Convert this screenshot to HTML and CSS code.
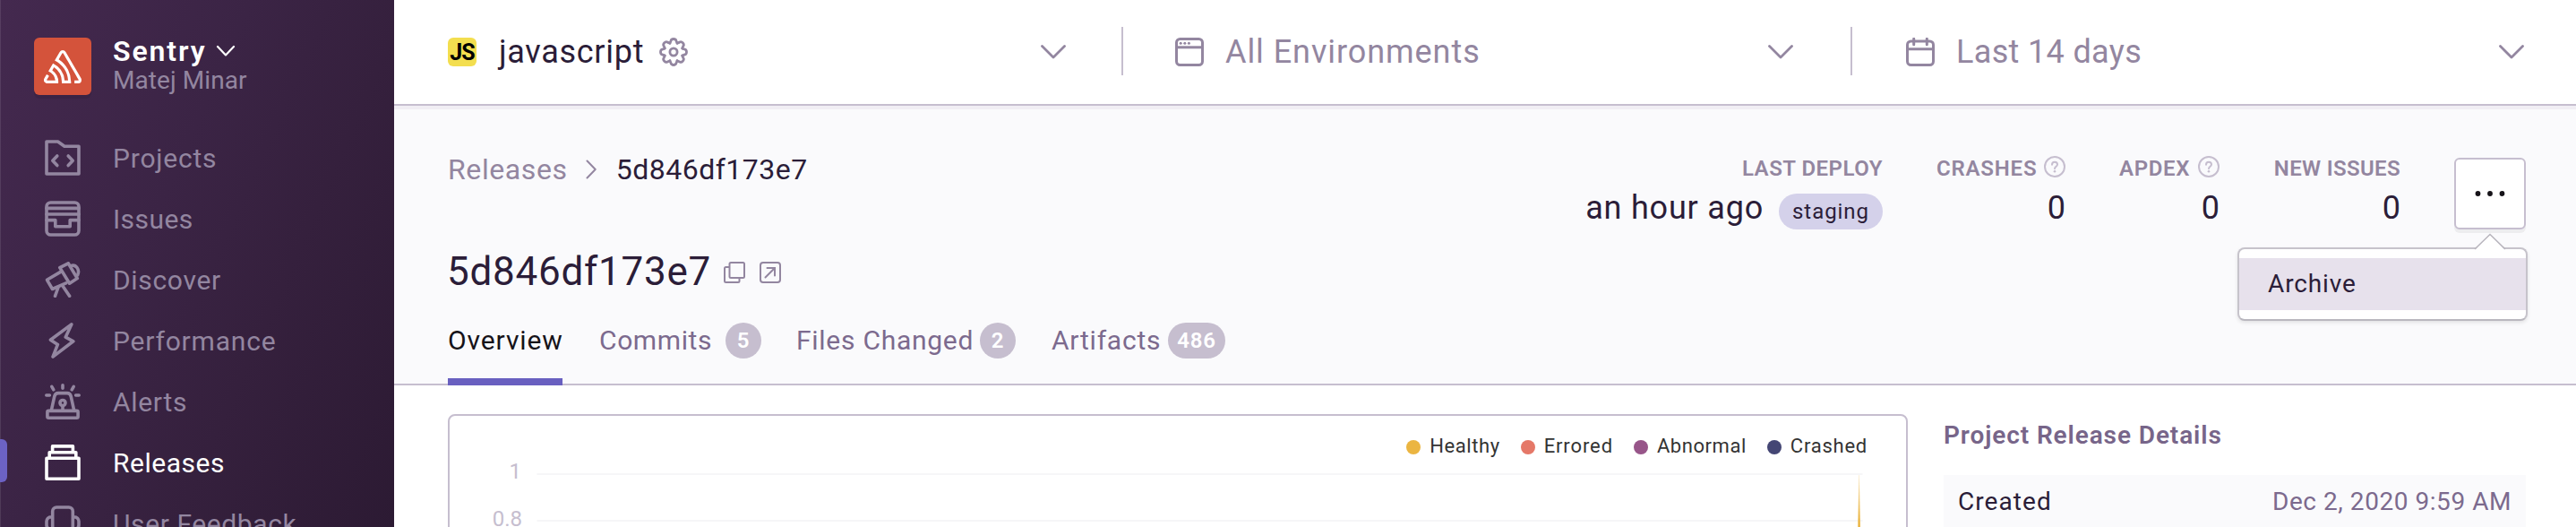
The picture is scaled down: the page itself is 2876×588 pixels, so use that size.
FILE: index.html
```html
<!DOCTYPE html>
<html lang="en">
<head>
<meta charset="utf-8">
<title>Sentry Releases</title>
<link rel="stylesheet" href="styles.css">
</head>
<body>
<div class="app">
  <aside class="sidebar">
    <div class="org">
      <div class="org-logo">
        <svg width="42" height="37" viewBox="0 0 50 44" fill="#fff"><path d="M29,2.26a4.67,4.67,0,0,0-8,0L14.42,13.53A32.21,32.21,0,0,1,32.17,40.19H27.55A27.68,27.68,0,0,0,12.09,17.47L6,28a15.92,15.92,0,0,1,9.23,12.17H4.62A.76.76,0,0,1,4,39.06l2.94-5a10.74,10.74,0,0,0-3.36-1.9l-2.91,5a4.54,4.54,0,0,0,1.69,6.24A4.66,4.66,0,0,0,4.62,44H19.15a19.4,19.4,0,0,0-8-17.31l2.31-4A23.87,23.87,0,0,1,23.76,44H36.07a35.88,35.88,0,0,0-16.41-31.8l4.67-8a.77.77,0,0,1,1.05-.27c.53.29,20.29,34.77,20.66,35.17a.76.76,0,0,1-.68,1.13H40.6q.09,1.91,0,3.81h4.78A4.59,4.59,0,0,0,50,39.43a4.49,4.49,0,0,0-.62-2.28Z"/></svg>
      </div>
      <div class="org-text">
        <div class="org-name">Sentry
          <svg width="22" height="14" viewBox="0 0 22 14" fill="none" stroke="#fff" stroke-width="2.2" stroke-linecap="round" stroke-linejoin="round"><path d="M2 2l9 9.4L20 2"/></svg>
        </div>
        <div class="org-user">Matej Minar</div>
      </div>
    </div>
    <nav class="nav">
      <a class="nav-item"><svg class="nav-icon" viewBox="0 0 40 40"><path d="M2 2h12.6l7.4 5.3h16V38H2z"/><path d="M13.8 18l-5 5.3 5 5.3M26.2 18l5 5.3-5 5.3"/></svg><span class="t-projects">Projects</span></a>
      <a class="nav-item"><svg class="nav-icon" viewBox="0 0 40 40"><rect x="2" y="2" width="36" height="36" rx="4.5"/><path d="M2 8.4h36M2 15h36M2 21.6h9.8v7.2h16.4v-7.2H38"/></svg><span class="t-issues">Issues</span></a>
      <a class="nav-item"><svg class="nav-icon" viewBox="0 0 40 40"><path d="M17.6 11.4L2.5 20.3l6 10.2 15.2-6.6"/><path d="M16.8 6.6l9.4-4.8L36.3 18.6l-8.7 5.6z"/><path d="M29 4.6c6-2 10.4 4.4 7.6 10.4M15.2 28l-3.7 10.3M19.6 26.4l8 11.9"/></svg><span class="t-discover">Discover</span></a>
      <a class="nav-item"><svg class="nav-icon" viewBox="0 0 40 40"><path d="M29.8 1.9L6.4 19.2l8 5.2L9 38.1 31.8 20.8l-8.6-4.6z"/></svg><span class="t-performance">Performance</span></a>
      <a class="nav-item"><svg class="nav-icon" viewBox="0 0 40 40"><path d="M20 1.8v3.4M7.8 3.4l2 3.4M32.2 3.4l-2 3.4M1.8 13h3.6M34.6 13h3.6"/><path d="M7.4 29.6L10.8 14.2Q11.7 10.6 15 10.6H25Q28.3 10.6 29.2 14.2L32.6 29.6"/><rect x="2.9" y="30.4" width="34.2" height="7.8" rx="1.5"/><circle cx="20" cy="21.5" r="3"/><path d="M20 25v4"/></svg><span class="t-alerts">Alerts</span></a>
      <a class="nav-item nav-item-active"><svg class="nav-icon" viewBox="0 0 40 40"><path d="M2 15.3h36v22.900H2zM5.2 15V8.700h29.600V15M8.600 8.400V1.900h22.800v6.500"/></svg><span class="t-releases">Releases</span></a>
      <a class="nav-item"><svg class="nav-icon" viewBox="0 0 40 40"><path d="M8.700 34V6.500a4.500 4.500 0 0 1 4.500-4.500h13.600a4.500 4.500 0 0 1 4.500 4.500V34M8.700 12.800H7a5 5 0 0 0-5 5v4a5 5 0 0 0 5 5h1.700M31.300 12.800H33a5 5 0 0 1 5 5v4a5 5 0 0 1-5 5h-1.700"/></svg><span class="t-feedback">User Feedback</span></a>
    </nav>
  </aside>

  <main class="main">
    <header class="filters">
      <div class="filter filter-project">
        <span class="js-badge">JS</span>
        <span class="filter-label t-javascript">javascript</span>
        <svg class="gear" width="32" height="32" viewBox="-16 -16 32 32" fill="none" stroke="#9386a0" stroke-width="2.8" stroke-linecap="round">
          <defs><path id="tooth" d="M9.8-4.06Q11.4-3.2 12.7-2.900Q14.500-2.400 14.500 0Q14.500 2.400 12.700 2.900Q11.400 3.200 9.800 4.060"/></defs>
          <use href="#tooth"/><use href="#tooth" transform="rotate(45)"/><use href="#tooth" transform="rotate(90)"/><use href="#tooth" transform="rotate(135)"/><use href="#tooth" transform="rotate(180)"/><use href="#tooth" transform="rotate(225)"/><use href="#tooth" transform="rotate(270)"/><use href="#tooth" transform="rotate(315)"/>
          <circle r="4.1"/>
        </svg>
        <svg class="chevron" viewBox="0 0 28 16"><path d="M1.5 1.5L14 14 26.5 1.5"/></svg>
      </div>
      <div class="divider"></div>
      <div class="filter filter-env">
        <svg class="filter-icon" viewBox="0 0 32 32"><rect x="1.5" y="1.5" width="29" height="29" rx="4"/><path d="M1.5 10.8h29"/><g fill="#9386a0" stroke="none"><circle cx="6.2" cy="6.3" r="1.5"/><circle cx="10.8" cy="6.3" r="1.5"/><circle cx="15.4" cy="6.3" r="1.5"/></g></svg>
        <span class="filter-label t-env">All Environments</span>
        <svg class="chevron" viewBox="0 0 28 16"><path d="M1.5 1.5L14 14 26.5 1.5"/></svg>
      </div>
      <div class="divider"></div>
      <div class="filter filter-date">
        <svg class="filter-icon" viewBox="0 0 32 32"><rect x="1.5" y="4" width="29" height="26.5" rx="4"/><path d="M1.5 12.8h29M8.7 1.2v6.6M23.3 1.2v6.6" stroke-linecap="round"/></svg>
        <span class="filter-label t-date">Last 14 days</span>
        <svg class="chevron" viewBox="0 0 28 16"><path d="M1.5 1.5L14 14 26.5 1.5"/></svg>
      </div>
    </header>

    <section class="release">
      <div class="release-left">
        <div class="crumbs">
          <a class="crumb-link">Releases</a>
          <svg width="12" height="22" viewBox="0 0 12 22" fill="none" stroke="#9386a0" stroke-width="2" stroke-linecap="round" stroke-linejoin="round"><path d="M1.5 1.5L10.7 11 1.5 20.5"/></svg>
          <span class="crumb-current">5d846df173e7</span>
        </div>
        <div class="title-row">
          <h1 class="title">5d846df173e7</h1>
          <svg class="title-icon" viewBox="0 0 24 24"><rect x="6.5" y="1" width="16.5" height="17" rx="1.5"/><path d="M6.5 6H2.5A1.5 1.5 0 0 0 1 7.5v14A1.5 1.5 0 0 0 2.5 23H16a1.5 1.5 0 0 0 1.5-1.5V18"/></svg>
          <svg class="title-icon" viewBox="0 0 24 24"><rect x="1" y="1" width="22" height="22" rx="3"/><path d="M6.5 17.5L17 7M8.5 7H17v8.5" stroke-linecap="round"/></svg>
        </div>
        <div class="tabs">
          <a class="tab tab-active"><span>Overview</span></a>
          <a class="tab tab-commits"><span>Commits</span><b class="badge">5</b></a>
          <a class="tab tab-files"><span>Files Changed</span><b class="badge">2</b></a>
          <a class="tab tab-artifacts"><span>Artifacts</span><b class="badge badge-wide">486</b></a>
        </div>
      </div>
      <div class="stats">
        <div class="stat">
          <div class="stat-label t-deploy">LAST DEPLOY</div>
          <div class="stat-value"><span class="t-ago">an hour ago</span><span class="pill">staging</span></div>
        </div>
        <div class="stat stat-crashes">
          <div class="stat-label t-crashes"><span>CRASHES</span><svg class="help" viewBox="0 0 24 24"><circle cx="12" cy="12" r="11"/><path d="M9 9.7C9 7.8 10.3 6.7 12 6.7s3 1.1 3 2.8c0 2.2-3 2.2-3 4.7"/><circle class="help-dot" cx="12" cy="17.3" r="1.3"/></svg></div>
          <div class="stat-value">0</div>
        </div>
        <div class="stat stat-apdex">
          <div class="stat-label t-apdex"><span>APDEX</span><svg class="help" viewBox="0 0 24 24"><circle cx="12" cy="12" r="11"/><path d="M9 9.7C9 7.8 10.3 6.7 12 6.7s3 1.1 3 2.8c0 2.2-3 2.2-3 4.7"/><circle class="help-dot" cx="12" cy="17.3" r="1.3"/></svg></div>
          <div class="stat-value">0</div>
        </div>
        <div class="stat stat-issues">
          <div class="stat-label t-new">NEW ISSUES</div>
          <div class="stat-value">0</div>
        </div>
        <div class="actions">
          <button class="more" aria-label="Actions">
            <svg width="36" height="8" viewBox="0 0 36 8" fill="#161319"><circle cx="4.5" cy="4" r="2.9"/><circle cx="18" cy="4" r="2.9"/><circle cx="31.5" cy="4" r="2.9"/></svg>
          </button>
          <div class="menu">
            <svg class="menu-arrow" width="38" height="19" viewBox="0 0 38 19"><path d="M2 19L19 1.5 36 19z" fill="#fff"/><path d="M2 18L19 1.5 36 18" fill="none" stroke="#b9b6be" stroke-width="1.6"/></svg>
            <div class="menu-item">Archive</div>
          </div>
        </div>
      </div>
    </section>

    <section class="content">
      <div class="card">
        <div class="legend">
          <span class="legend-item t-healthy"><i class="dot dot-healthy"></i>Healthy</span>
          <span class="legend-item t-errored"><i class="dot dot-errored"></i>Errored</span>
          <span class="legend-item t-abnormal"><i class="dot dot-abnormal"></i>Abnormal</span>
          <span class="legend-item t-crashed"><i class="dot dot-crashed"></i>Crashed</span>
        </div>
        <svg class="chart" width="1626" height="80" viewBox="0 0 1626 80">
          <defs><linearGradient id="spike" x1="0" y1="0" x2="0" y2="1"><stop offset="0" stop-color="#ebb541" stop-opacity=".3"/><stop offset=".8" stop-color="#ebb541"/></linearGradient></defs>
          <path d="M97.5 15H1577.5M97.5 67H1577.5" stroke="#f6f6f8" stroke-width="2"/>
          <text class="axis" x="80" y="20" text-anchor="end">1</text>
          <text class="axis" x="81" y="73" text-anchor="end">0.8</text>
          <path d="M1573.300 16h.6L1575 80h-2.800z" fill="url(#spike)"/>
        </svg>
      </div>
      <div class="details">
        <h2 class="details-title">Project Release Details</h2>
        <div class="details-row"><span class="t-created">Created</span><span class="details-value">Dec 2, 2020 9:59 AM</span></div>
      </div>
    </section>
  </main>
</div>
</body>
</html>
```
FILE: styles.css
```css
* { box-sizing: border-box; }
body {
  margin: 0;
  height: 588px;
  overflow: hidden;
  background: #fff;
  color: #2b1d38;
  font-family: Roboto, "Noto Sans", sans-serif;
}
svg { display: block; flex: none; }
.app { display: flex; height: 588px; overflow: hidden; }

/* Sidebar */
.sidebar {
  flex: none;
  width: 440px;
  height: 588px;
  overflow: hidden;
  background: linear-gradient(294deg, #2c1a33 0%, #35203d 35%, #3b2445 60%, #44294f 100%);
  box-shadow: inset 1px 0 0 rgba(255, 255, 255, .1);
}
.org { display: flex; gap: 24px; height: 142px; padding: 42px 0 0 38px; }
.org-logo {
  display: flex;
  align-items: center;
  justify-content: center;
  width: 64px;
  height: 64px;
  border-radius: 6px;
  background: #d4533b;
  box-shadow: 0 4px 0 rgba(0, 0, 0, .08);
}
.org-text { margin-top: -3px; }
.org-name {
  display: flex;
  align-items: center;
  gap: 11px;
  color: #fff;
  font-size: 32px;
  font-weight: 600;
  line-height: 36px;
  letter-spacing: 1.9px;
}
.org-user { color: #9386a0; font-size: 28px; line-height: 30px; letter-spacing: .07px; }
.nav { display: flex; flex-direction: column; }
.nav-item {
  position: relative;
  display: flex;
  flex: none;
  align-items: center;
  gap: 36px;
  height: 68px;
  padding-left: 50px;
  color: #9386a0;
  font-size: 30px;
  white-space: nowrap;
}
.nav-item-active { color: #fff; }
.nav-item-active::before {
  content: "";
  position: absolute;
  left: 0;
  top: 8px;
  width: 8px;
  height: 48px;
  border-radius: 0 6px 6px 0;
  background: #6c62c4;
}
.nav-icon {
  width: 40px;
  height: 40px;
  fill: none;
  stroke: currentColor;
  stroke-width: 3.6;
  stroke-linecap: round;
  stroke-linejoin: round;
}
.t-projects { letter-spacing: .8px; }
.t-issues { letter-spacing: .45px; }
.t-discover { letter-spacing: .67px; }
.t-performance { letter-spacing: .8px; }
.t-alerts { letter-spacing: .7px; }
.t-releases { letter-spacing: .53px; }
.t-feedback { letter-spacing: .6px; }

/* Global filter bar */
.main { flex: 1; min-width: 0; }
.filters {
  position: relative;
  display: flex;
  align-items: center;
  height: 118px;
  border-bottom: 2px solid #c6becf;
  box-shadow: 0 4px 0 #f1eef4;
}
.filter { display: flex; align-items: center; width: 812px; color: #9386a0; }
.filter-project { padding: 0 62px 0 60px; color: #2b1d38; }
.filter-env { padding: 0 64px 0 58px; }
.filter-date { width: 808px; padding: 0 58px 0 60px; }
.filter-label { font-size: 36px; line-height: 44px; white-space: nowrap; }
.filter-icon { width: 32px; height: 32px; margin-right: 24px; fill: none; stroke: #9386a0; stroke-width: 3; }
.t-javascript { margin: 0 17px 0 25px; letter-spacing: .71px; }
.t-env { letter-spacing: .94px; }
.t-date { letter-spacing: .35px; }
.js-badge {
  width: 32px;
  height: 32px;
  border-radius: 6px;
  background: #f3de4f;
  color: #000;
  font-size: 25px;
  font-weight: 700;
  line-height: 33px;
  letter-spacing: -1px;
  text-align: center;
}
.chevron {
  width: 28px;
  height: 16px;
  margin-left: auto;
  fill: none;
  stroke: #9386a0;
  stroke-width: 2.8;
  stroke-linecap: round;
  stroke-linejoin: round;
}
.divider { width: 2px; height: 54px; margin-bottom: 2px; background: #c6becf; }

/* Release header */
.release {
  display: flex;
  justify-content: space-between;
  height: 312px;
  padding: 51px 56px 0 60px;
  border-bottom: 2px solid #c6becf;
  background: #fafafc;
}
.crumbs { display: flex; align-items: center; gap: 20px; font-size: 32px; line-height: 40px; }
.crumb-link { color: #9386a0; letter-spacing: .6px; }
.crumb-current { margin-left: 2px; letter-spacing: .5px; }
.title-row { display: flex; align-items: center; margin-top: 66px; }
.title { width: 308px; margin: 0 0 0 -1px; font-size: 44px; font-weight: 400; line-height: 56px; letter-spacing: .75px; }
.title-icon { width: 24px; height: 24px; margin: 2px 16px 0 0; fill: none; stroke: #9386a0; stroke-width: 2; }
.title-icon:nth-of-type(1) { margin-left: 1px; }
.tabs { display: flex; margin-top: 29px; color: #7c6a8e; font-size: 30px; line-height: 40px; white-space: nowrap; }
.tab { display: flex; justify-content: space-between; height: 70px; border-bottom: 8px solid transparent; }
.tab-active { width: 128px; margin-right: 41px; border-color: #6960c0; color: #161319; letter-spacing: .9px; }
.tab-commits { width: 181px; margin-right: 39px; letter-spacing: .61px; }
.tab-files { width: 245px; margin-right: 40px; letter-spacing: .73px; }
.tab-artifacts { width: 194px; letter-spacing: .77px; }
.badge {
  width: 40px;
  height: 40px;
  border-radius: 20px;
  background: #c6becf;
  color: #fff;
  font-size: 24px;
  font-weight: 600;
  letter-spacing: .8px;
  text-align: center;
}
.badge-wide { width: 64px; }

.stats { display: flex; gap: 60px; padding-top: 5px; }
.stat { white-space: nowrap; }
.stat-crashes { width: 144px; }
.stat-apdex { width: 112px; }
.stat-issues { width: 142px; }
.stat-label {
  display: flex;
  justify-content: flex-end;
  height: 28px;
  color: #9386a0;
  font-size: 24px;
  font-weight: 600;
  line-height: 28px;
}
.t-crashes, .t-apdex { justify-content: space-between; }
.t-deploy { letter-spacing: .5px; }
.t-crashes { letter-spacing: .8px; }
.t-apdex { letter-spacing: .65px; }
.t-new { letter-spacing: .35px; }
.help { width: 24px; height: 24px; fill: none; stroke: #c6becf; stroke-width: 2; stroke-linecap: round; }
.help-dot { fill: #c6becf; stroke: none; }
.stat-value {
  display: flex;
  align-items: baseline;
  justify-content: flex-end;
  margin-top: 8px;
  font-size: 36px;
  line-height: 44px;
}
.t-ago { margin-right: 17px; letter-spacing: .8px; }
.pill {
  width: 116px;
  height: 40px;
  border-radius: 20px;
  background: #d4d1ea;
  font-size: 24px;
  line-height: 40px;
  letter-spacing: .95px;
  text-align: center;
}
.actions { position: relative; width: 80px; height: 80px; margin-top: 2px; }
.more {
  display: flex;
  align-items: center;
  justify-content: center;
  width: 80px;
  height: 80px;
  padding: 0;
  border: 2px solid #c6becf;
  border-radius: 6px;
  background: #fff;
  box-shadow: 0 4px 0 rgba(0, 0, 0, .05);
}
.menu {
  position: absolute;
  top: 100px;
  right: -2px;
  width: 324px;
  height: 82px;
  padding: 10px 0;
  border: 2px solid #c6c3cb;
  border-bottom-color: #b9b7bf;
  border-radius: 8px;
  background: #fff;
  box-shadow: 0 2px 4px rgba(0, 0, 0, .1);
}
.menu-arrow { position: absolute; right: 21px; top: -18px; }
.menu-item { height: 58px; padding-left: 32px; background: #e7e1ec; font-size: 28px; line-height: 58px; letter-spacing: .87px; }

/* Content */
.content { display: flex; gap: 40px; height: 158px; padding: 32px 56px 0 60px; overflow: hidden; }
.card { flex: none; width: 1630px; height: 300px; border: 2px solid #c6becf; border-radius: 8px; }
.legend {
  display: flex;
  justify-content: flex-end;
  gap: 23px;
  height: 50px;
  padding: 19px 43px 0 0;
  color: #333;
  font-size: 22px;
  line-height: 30px;
}
.legend-item { display: flex; }
.dot { width: 16px; height: 16px; margin: 8px 10px 0 0; border-radius: 50%; }
.dot-healthy { background: #ebb541; }
.dot-errored { background: #e57868; }
.dot-abnormal { background: #975589; }
.dot-crashed { background: #444674; }
.t-healthy { letter-spacing: .58px; }
.t-errored { letter-spacing: .89px; }
.t-abnormal { letter-spacing: .55px; }
.t-crashed { letter-spacing: .76px; }
.axis { fill: #c6becf; font-size: 24px; }
.details { flex: none; width: 650px; padding-top: 6px; }
.details-title { margin: 0 0 26px; color: #776589; font-size: 28px; font-weight: 600; line-height: 36px; letter-spacing: .9px; }
.details-row {
  display: flex;
  justify-content: space-between;
  height: 60px;
  padding: 0 16px;
  background: #fafafc;
  font-size: 28px;
  line-height: 60px;
}
.t-created { letter-spacing: 1.08px; }
.details-value { color: #7c6a8e; letter-spacing: .55px; }
```
